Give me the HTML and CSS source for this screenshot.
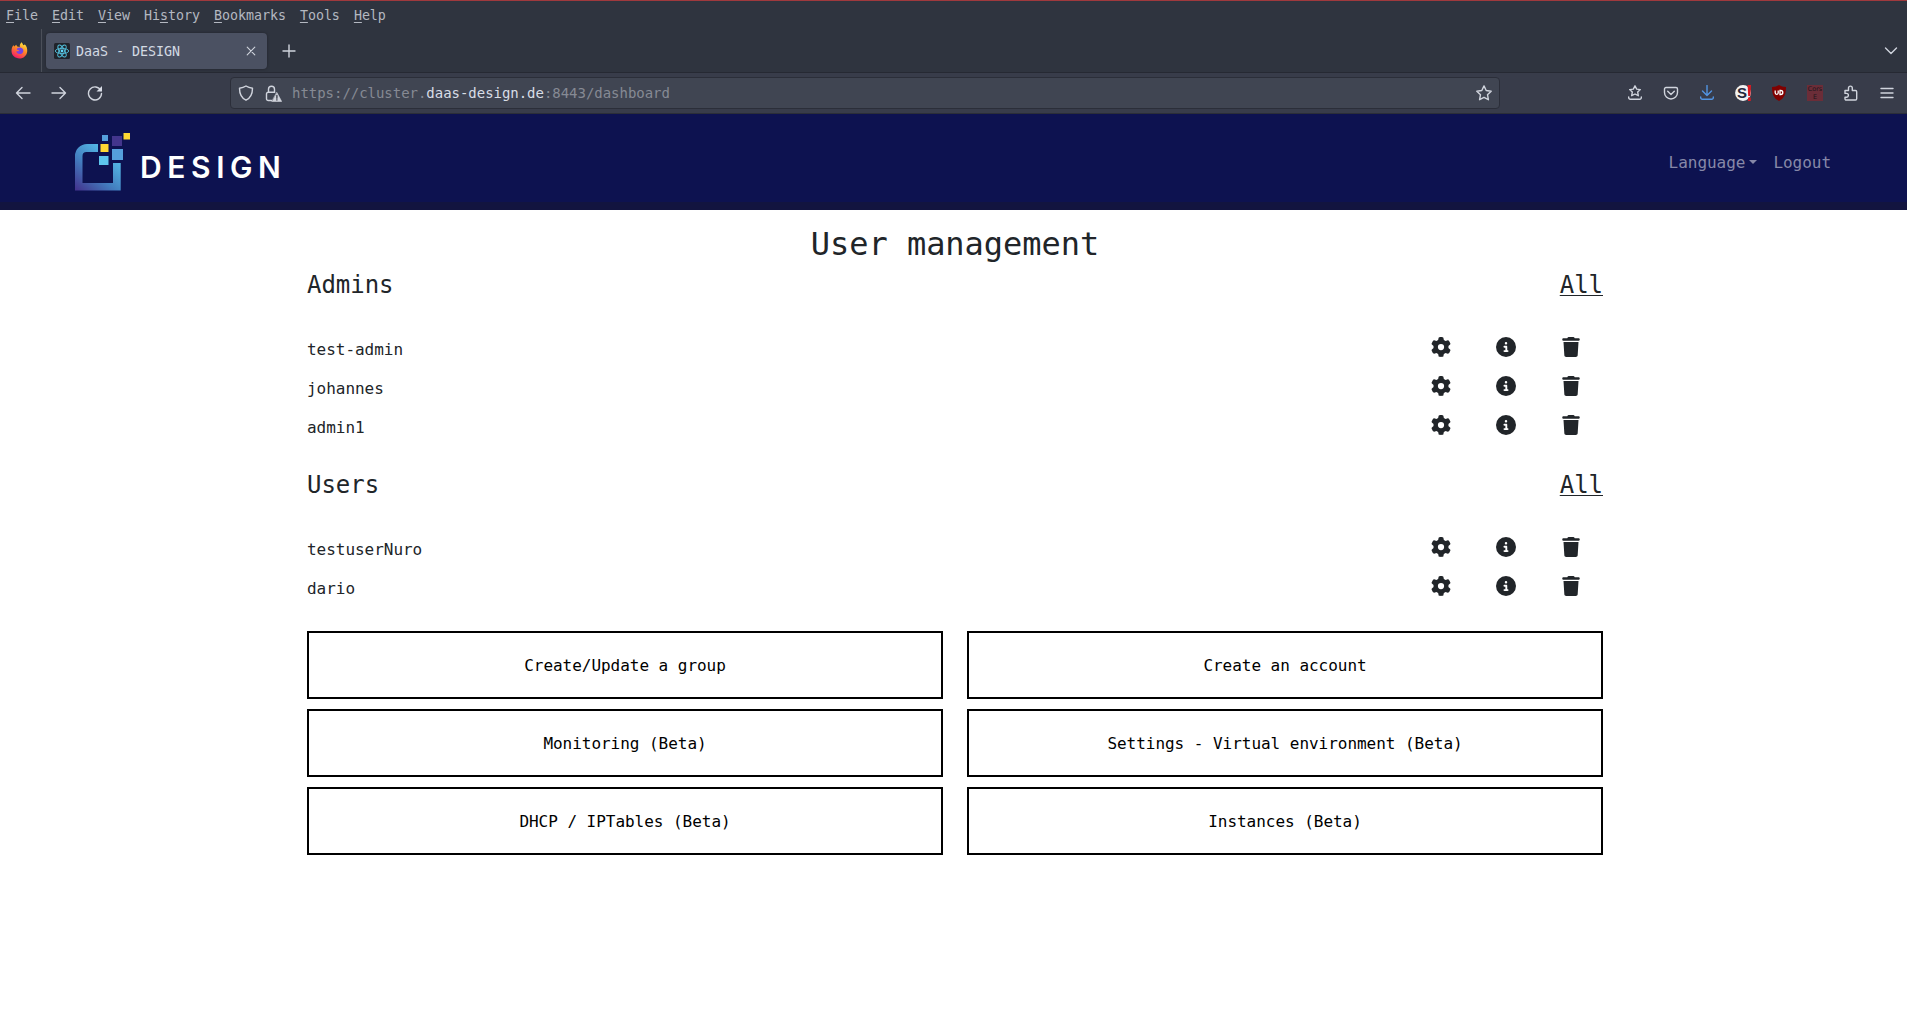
FILE: index.html
```html
<!DOCTYPE html>
<html lang="en">
<head>
<meta charset="utf-8">
<title>DaaS - DESIGN</title>
<link rel="stylesheet" href="styles.css">
</head>
<body>
<svg width="0" height="0" class="defs">
  <symbol id="gear" viewBox="0 0 512 512"><path d="M495.9 166.6c3.200 8.700.500 18.400-6.400 24.600l-43.300 39.400c1.100 8.300 1.700 16.800 1.700 25.400s-.600 17.100-1.700 25.400l43.300 39.400c6.900 6.200 9.600 15.900 6.400 24.600c-4.400 11.900-9.700 23.300-15.800 34.300l-4.700 8.100c-6.600 11-14 21.400-22.100 31.200c-5.900 7.200-15.700 9.600-24.500 6.800l-55.700-17.700c-13.400 10.300-28.200 18.900-44 25.400l-12.500 57.100c-2 9.100-9 16.300-18.200 17.800c-13.800 2.300-28 3.500-42.500 3.500s-28.700-1.200-42.500-3.500c-9.200-1.500-16.200-8.700-18.200-17.800l-12.500-57.100c-15.800-6.500-30.600-15.100-44-25.400L83.100 425.900c-8.800 2.800-18.600.300-24.500-6.800c-8.100-9.800-15.500-20.200-22.100-31.200l-4.700-8.100c-6.100-11-11.400-22.400-15.800-34.300c-3.200-8.700-.500-18.400 6.400-24.600l43.300-39.400C64.600 273.100 64 264.600 64 256s.600-17.100 1.700-25.400L22.400 191.200c-6.900-6.200-9.600-15.900-6.400-24.600c4.400-11.900 9.700-23.300 15.800-34.300l4.700-8.100c6.600-11 14-21.400 22.100-31.200c5.900-7.200 15.700-9.600 24.500-6.800l55.700 17.700c13.400-10.300 28.200-18.900 44-25.400l12.500-57.100c2-9.100 9-16.300 18.200-17.800C227.300 1.200 241.500 0 256 0s28.700 1.200 42.500 3.500c9.200 1.500 16.200 8.700 18.200 17.800l12.500 57.100c15.800 6.500 30.600 15.100 44 25.400l55.700-17.700c8.800-2.800 18.600-.300 24.500 6.800c8.100 9.800 15.500 20.200 22.100 31.200l4.700 8.100c6.100 11 11.400 22.400 15.800 34.300zM256 336a80 80 0 1 0 0-160 80 80 0 1 0 0 160z"/></symbol>
  <symbol id="info" viewBox="0 0 512 512"><path d="M256 512A256 256 0 1 0 256 0a256 256 0 1 0 0 512zM216 336h24V272H216c-13.300 0-24-10.700-24-24s10.700-24 24-24h48c13.300 0 24 10.700 24 24v88h8c13.300 0 24 10.700 24 24s-10.700 24-24 24H216c-13.300 0-24-10.700-24-24s10.700-24 24-24zm40-208a32 32 0 1 1 0 64 32 32 0 1 1 0-64z"/></symbol>
  <symbol id="trash" viewBox="0 0 448 512"><path d="M135.200 17.700L128 32H32C14.300 32 0 46.300 0 64S14.300 96 32 96H416c17.700 0 32-14.300 32-32s-14.300-32-32-32H320l-7.200-14.300C307.400 6.800 296.300 0 284.200 0H163.800c-12.100 0-23.200 6.800-28.600 17.700zM416 128H32L53.200 467c1.600 25.300 22.600 45 47.900 45H346.900c25.300 0 46.300-19.700 47.900-45L416 128z"/></symbol>
</svg>

<header class="browser">
  <nav class="menubar">
    <span><u>F</u>ile</span><span><u>E</u>dit</span><span><u>V</u>iew</span><span>Hi<u>s</u>tory</span><span><u>B</u>ookmarks</span><span><u>T</u>ools</span><span><u>H</u>elp</span>
  </nav>
  <div class="tabbar">
    <div class="home">
      <svg width="17" height="17" viewBox="0 0 17 17">
        <defs>
          <linearGradient id="fire" x1=".8" y1="0" x2=".3" y2="1"><stop offset="0" stop-color="#fff044"/><stop offset=".45" stop-color="#ff8a26"/><stop offset="1" stop-color="#f5156c"/></linearGradient>
        </defs>
        <path d="M10.500.300c1 1 1.500 2 1.700 2.900 1-.1 1.300-.5 1.500-1 2 2 2.800 4.500 2.500 7.200-.5 4.300-3.700 7-7.700 7C4 16.400.500 13.200.500 9c0-2.700.8-4.500 2-6 .2.800.4 1.200.8 1.600.6-1 1.300-1.500 2.200-1.800-.1.800.2 1.400.8 1.800l2.500.300C8.600 3.600 9 1.700 10.500.300z" fill="url(#fire)"/>
        <path d="M6.300 6c1.600-1 4.500-.8 5.700 1.200 1 2-.2 4.600-2.700 4.900-2.300.2-4-1.200-3.900-3 1 .5 2.300.3 3-.7L6 7.700z" fill="#7542e5"/>
      </svg>
    </div>
    <div class="tab">
      <svg width="16" height="16" viewBox="0 0 16 16"><rect width="16" height="16" rx="1.500" fill="#20232a"/><g fill="none" stroke="#53c1de" stroke-width=".9"><ellipse cx="8" cy="8" rx="6.700" ry="2.600"/><ellipse cx="8" cy="8" rx="6.700" ry="2.600" transform="rotate(60 8 8)"/><ellipse cx="8" cy="8" rx="6.700" ry="2.600" transform="rotate(120 8 8)"/></g><circle cx="8" cy="8" r="1.400" fill="#61dafb"/></svg>
      <span class="tab-title">DaaS - DESIGN</span>
      <svg class="line thin" width="10" height="10" viewBox="0 0 10 10"><path d="M1.200 1.200l7.600 7.600M8.800 1.200L1.200 8.800"/></svg>
    </div>
    <svg class="line plus" width="14" height="14" viewBox="0 0 14 14"><path d="M7 1v12M1 7h12"/></svg>
    <svg class="line chevron" width="14" height="10" viewBox="0 0 14 10"><path d="M1.500 2L7 7.500 12.500 2"/></svg>
  </div>
  <div class="toolbar">
    <div class="navs">
      <svg class="line" width="16" height="16" viewBox="0 0 16 16"><path d="M15 8H1.500M7 2.500L1.500 8 7 13.500"/></svg>
      <svg class="line" width="16" height="16" viewBox="0 0 16 16"><path d="M1 8h13.500M9 2.500L14.500 8 9 13.500"/></svg>
      <svg class="line" width="16" height="16" viewBox="0 0 16 16"><path d="M13.800 5.500A6.500 6.500 0 1 0 14.500 8.500"/><path d="M15 1v5.500H9.500z" fill="#d8dce6" stroke="none"/></svg>
    </div>
    <div class="urlbar">
      <svg class="line" width="16" height="16" viewBox="0 0 16 16"><path d="M8 1c2 1.300 4 1.900 6.500 2.200C14.500 9 12.500 13 8 15.200 3.500 13 1.500 9 1.500 3.200 4 2.900 6 2.300 8 1z"/></svg>
      <svg class="line lock" width="17" height="17" viewBox="0 0 17 17"><path d="M6.500 15.500H3.300a1.800 1.800 0 0 1-1.800-1.800V9a1.800 1.800 0 0 1 1.800-1.800h6.400M3.500 7V4.300a3 3 0 0 1 6 0V7"/><path d="M11.900 7.600l4.800 8.900H7.100z" fill="#d0d3db" stroke="#d0d3db" stroke-width=".6"/><path d="M11.900 10.500v2.700M11.900 14.800v.2" stroke="#40444f"/></svg>
      <span class="url">https://cluster.<b>daas-design.de</b>:8443/dashboard</span>
      <svg class="line" width="16" height="16" viewBox="0 0 16 16"><path d="M8 .900l2.200 4.600 5 .7-3.700 3.500.9 5L8 12.300l-4.400 2.400.9-5L.800 6.200l5-.7z"/></svg>
    </div>
    <div class="tools">
      <svg class="line" width="16" height="16" viewBox="0 0 16 16"><path d="M8 .800l1.700 3.300 3.600.5-2.600 2.500.6 3.600L8 9l-3.300 1.700.6-3.600L2.700 4.600l3.600-.5zM1.700 12v.8a1.500 1.500 0 0 0 1.500 1.500h9.600a1.500 1.500 0 0 0 1.500-1.500V12"/></svg>
      <svg class="line" width="16" height="16" viewBox="0 0 16 16"><path d="M3 2.500h10a1.500 1.500 0 0 1 1.500 1.500v3.500a6.500 6.500 0 0 1-13 0V4A1.500 1.500 0 0 1 3 2.500zM4.700 6.300L8 9.500l3.300-3.200"/></svg>
      <svg class="line blue" width="16" height="16" viewBox="0 0 16 16"><path d="M8 .500v10M3.500 6L8 10.500 12.500 6M1.700 12v.8a1.500 1.500 0 0 0 1.500 1.500h9.600a1.500 1.500 0 0 0 1.500-1.500V12"/></svg>
      <svg class="badge" width="16" height="16" viewBox="0 0 16 16"><circle cx="8" cy="8" r="7.900" fill="#f2f2f2"/><text x="2" y="13.400" class="s-mark">S</text><path d="M12.600 0H16l-.6 11h-2.200zM13 12.500h2.700V16H13z" fill="#dc1a21"/></svg>
      <svg width="16" height="16" viewBox="0 0 16 16"><path d="M8 0c2 1.300 4 1.800 7 2 0 6-1 11-7 14C2 13 1 8 1 2c3-.2 5-.7 7-2z" fill="#800000"/><path d="M4.200 5.500v2.300a1.500 1.500 0 0 0 3 0V5.500M9 5.500h.8a2 2 0 0 1 0 4H9z" fill="none" stroke="#fff" stroke-width="1.300"/></svg>
      <span class="cors">Cors<br>E</span>
      <svg class="line" width="16" height="16" viewBox="0 0 16 16"><path d="M2 5.500h3.500V3a1.900 1.900 0 0 1 3.800 0v2.500h3.200a1.200 1.200 0 0 1 1.200 1.200v7.100a1.200 1.200 0 0 1-1.200 1.200H3.200A1.200 1.200 0 0 1 2 13.800v-1.600h1.500a1.900 1.900 0 0 0 0-3.800H2z"/></svg>
      <svg class="line" width="16" height="12" viewBox="0 0 16 12"><path d="M2 1.500h12M2 6h12M2 10.500h12"/></svg>
    </div>
  </div>
</header>

<header class="site">
  <div class="brand">
    <svg width="56" height="58" viewBox="0 0 56 58">
      <defs><linearGradient id="frame" x1=".05" y1="1" x2=".75" y2=".15"><stop offset="0" stop-color="#43348e"/><stop offset=".5" stop-color="#437fc0"/><stop offset="1" stop-color="#55bde8"/></linearGradient></defs>
      <path d="M23 11H12A12 12 0 0 0 0 23V57.500H45.700V30H38V50H7.500V23A4 4 0 0 1 11.500 19H23z" fill="url(#frame)"/>
      <path d="M27 2h6v6h-6zM37 16h11v11H37z" fill="#559fdb"/>
      <path d="M37 3h10v10H37z" fill="#43358c"/>
      <path d="M48.500 0h6.500v6.500h-6.500zM25.500 11h8v8h-8z" fill="#ffd833"/>
      <path d="M24 23h9.500v9H24z" fill="#5dc5ed"/>
    </svg>
    <span class="wordmark">DESIGN</span>
  </div>
  <nav class="links"><span class="dropdown">Language</span><span>Logout</span></nav>
</header>

<main>
  <h1>User management</h1>
  <section class="group">
    <div class="heading"><h2>Admins</h2><span class="all">All</span></div>
    <div class="row"><span class="name">test-admin</span><svg><use href="#gear"/></svg><svg><use href="#info"/></svg><svg><use href="#trash"/></svg></div>
    <div class="row"><span class="name">johannes</span><svg><use href="#gear"/></svg><svg><use href="#info"/></svg><svg><use href="#trash"/></svg></div>
    <div class="row"><span class="name">admin1</span><svg><use href="#gear"/></svg><svg><use href="#info"/></svg><svg><use href="#trash"/></svg></div>
  </section>
  <section class="group">
    <div class="heading"><h2>Users</h2><span class="all">All</span></div>
    <div class="row"><span class="name">testuserNuro</span><svg><use href="#gear"/></svg><svg><use href="#info"/></svg><svg><use href="#trash"/></svg></div>
    <div class="row"><span class="name">dario</span><svg><use href="#gear"/></svg><svg><use href="#info"/></svg><svg><use href="#trash"/></svg></div>
  </section>
  <div class="actions">
    <button>Create/Update a group</button><button>Create an account</button>
    <button>Monitoring (Beta)</button><button>Settings - Virtual environment (Beta)</button>
    <button>DHCP / IPTables (Beta)</button><button>Instances (Beta)</button>
  </div>
</main>
</body>
</html>
```
FILE: styles.css
```css
* { box-sizing: border-box; }
body {
  margin: 0;
  background: #fff;
  color: #212529;
  font: 16px/24px "DejaVu Sans Mono", "Liberation Mono", monospace;
  letter-spacing: -0.002em;
}
svg { display: block; flex: none; }
.defs { position: absolute; }

.browser { height: 114px; background: #2f343f; color: #b4b8c1; font-size: 13.33px; }
.menubar {
  display: flex;
  gap: 14px;
  height: 29px;
  padding-left: 6px;
  border-top: 1px solid #a0393d;
  line-height: 30px;
}
.menubar u { text-underline-offset: 2px; text-decoration-thickness: 1px; }
.tabbar { display: flex; align-items: center; height: 43px; }
.home {
  display: flex;
  align-items: center;
  width: 42px;
  height: 43px;
  padding-left: 11px;
  border-right: 1px solid #4b4f59;
}
.tab {
  display: flex;
  align-items: center;
  width: 221px;
  height: 36px;
  margin-left: 4px;
  padding: 0 11px 0 8px;
  border-radius: 4px;
  background: #4b5162;
  box-shadow: 0 0 3px #20232b;
  color: #d3dae3;
}
.tab-title { flex: 1; margin-left: 6px; padding-top: 2px; }
.line { fill: none; stroke: #d0d4dd; stroke-width: 1.4; stroke-linecap: round; stroke-linejoin: round; }
.thin { stroke-width: 1.1; }
.plus { margin-left: 15px; }
.chevron { margin-left: auto; margin-right: 9px; }
.toolbar {
  display: flex;
  align-items: center;
  height: 42px;
  padding: 0 12px 0 15px;
  border-top: 1px solid #262933;
  border-bottom: 1px solid #2b2e38;
  background: #383c4a;
}
.navs { display: flex; gap: 20px; width: 215px; }
.urlbar {
  display: flex;
  align-items: center;
  width: 1270px;
  height: 32px;
  padding: 0 7px;
  border: 1px solid #2b2e39;
  border-radius: 4px;
  background: #404552;
}
.lock { margin-left: 11px; }
.url { flex: 1; margin-left: 10px; font-size: 14px; color: #868a94; }
.url b { font-weight: 400; color: #d8dde6; }
.tools { display: flex; flex: 1; align-items: center; justify-content: flex-end; gap: 20px; }
.blue { stroke: #5294e2; }
.badge { overflow: visible; }
.s-mark { font: bold 15px "Liberation Sans", sans-serif; fill: #25283b; }
.cors {
  width: 16px;
  height: 16px;
  background: #6b2d38;
  color: #20171d;
  font: 6.5px/8px "DejaVu Sans", sans-serif;
  text-align: center;
}

.site {
  display: flex;
  justify-content: space-between;
  height: 96px;
  padding: 19px 76px 0 75px;
  border-bottom: 8px solid #12143f;
  background: #0d1250;
}
.brand { display: flex; }
.wordmark {
  margin: 17px 0 0 9px;
  color: #fff;
  font: 600 30px/34px Inter, "Liberation Sans", sans-serif;
  letter-spacing: 5.6px;
}
.links { display: flex; gap: 16px; padding-top: 18px; color: #8688a8; line-height: 24px; }
.dropdown::after {
  content: "";
  display: inline-block;
  margin-left: 4px;
  vertical-align: 4px;
  border: 4px solid transparent;
  border-top-color: currentColor;
  border-bottom: 0;
}

main { width: 1296px; margin: 0 0 0 307px; padding-top: 15px; }
h1, h2 { margin: 0; font-weight: 400; }
h1 { height: 46px; font-size: 32px; line-height: 38px; text-align: center; }
.heading { display: flex; justify-content: space-between; height: 60px; font-size: 24px; line-height: 28px; }
h2 { font-size: 24px; }
.all { text-decoration: underline; text-decoration-thickness: 1px; text-underline-offset: 2px; }
.group { margin-bottom: 23px; }
.group + .group { margin-bottom: 22px; }
.row { display: flex; height: 39px; padding-right: 22px; gap: 45px; }
.name { flex: 1; padding-top: 7px; line-height: 24px; }
.row svg { width: 20px; height: 20px; margin-top: 6px; fill: #212529; }
.actions { display: grid; grid-template-columns: 1fr 1fr; gap: 10px 24px; }
button {
  height: 68px;
  padding: 2px 0 0;
  border: 2px solid #000;
  background: #fff;
  color: #000;
  font: inherit;
  letter-spacing: inherit;
}
```
